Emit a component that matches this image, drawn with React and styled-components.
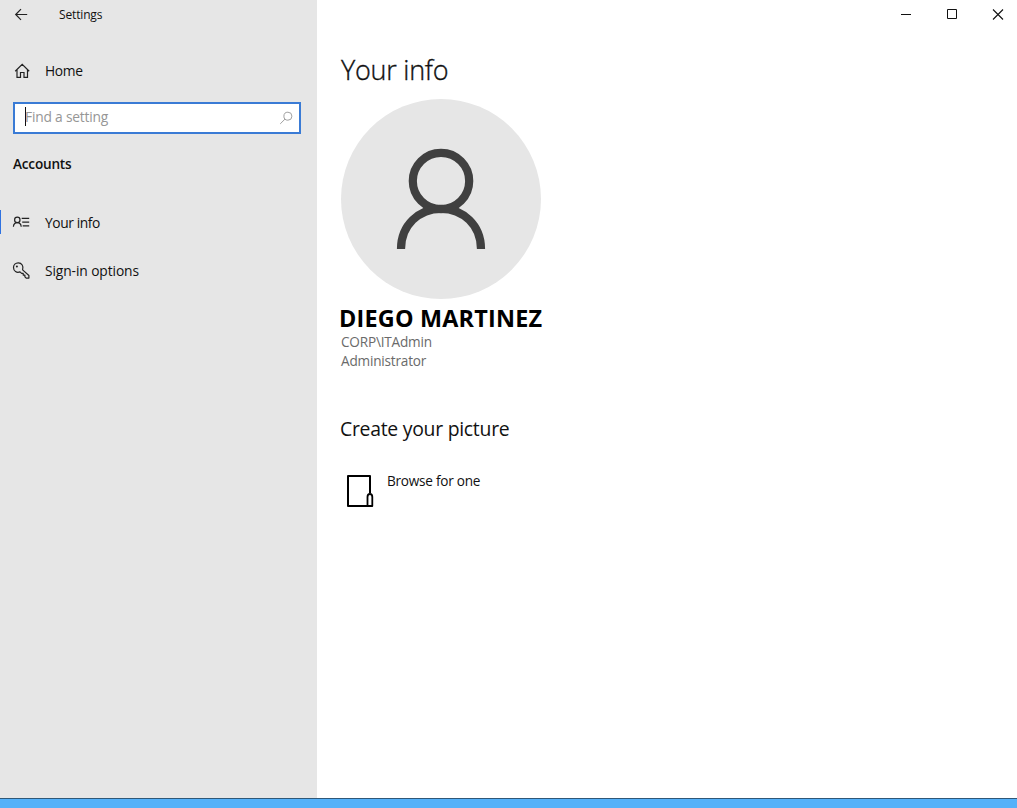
import React from "react";
import styled, { createGlobalStyle } from "styled-components";

const GlobalStyle = createGlobalStyle`
  * { box-sizing: border-box; }
  body { margin: 0; background: #fff; overflow: hidden; }
  h1, h2, h3, p { margin: 0; font-weight: 400; }
  button { border: 0; padding: 0; background: none; font: inherit; color: inherit; }
  svg { display: block; flex: none; }
`;

const Desktop = styled.div`
  height: 808px;
  display: flex;
  flex-direction: column;
  background: #55b1f9;
  font-family: "Open Sans", "Noto Sans", sans-serif;
  color: #111;
`;

const Window = styled.div`
  height: 799px;
  display: flex;
  background: #fff;
  border-bottom: 1px solid #2f5878;
`;

const Label = styled.span`
  font-size: ${(p) => p.$size || 14}px;
  font-weight: ${(p) => p.$weight || 400};
  letter-spacing: ${(p) => p.$spacing || 0}px;
  line-height: 20px;
  white-space: nowrap;
`;

const Sidebar = styled.aside`
  width: 317px;
  display: flex;
  flex-direction: column;
  background: #e6e6e6;
`;

const TitleBar = styled.header`
  height: 30px;
  padding-left: 14px;
  display: flex;
  align-items: center;
  gap: 30px;

  svg {
    margin-top: -1px;
  }
`;

const NavItem = styled.button`
  height: 48px;
  padding-left: 11px;
  display: flex;
  align-items: center;
  gap: 13px;
  border-left: 1px solid transparent;
  border-image: ${(p) =>
    p.$active
      ? "linear-gradient(transparent 11px, #2f72e0 11px, #2f72e0 35px, transparent 35px) 0 0 0 1"
      : "none"};
`;

const HomeItem = styled(NavItem)`
  margin: 17px 0 7px;
`;

const SearchBox = styled.div`
  height: 32px;
  margin: 0 16px 0 13px;
  padding: 0 6px 0 10px;
  display: flex;
  align-items: center;
  background: #fff;
  border: 2px solid #3a7bd5;
  color: #969696;
`;

const Caret = styled.span`
  width: 1px;
  height: 19px;
  margin-right: -1px;
  margin-top: -3px;
  background: #111;
`;

const Placeholder = styled(Label)`
  flex: 1;
  padding-bottom: 2px;
`;

const SectionTitle = styled.h3`
  height: 20px;
  margin: 20px 0 25px 13px;
  display: flex;
`;

const Content = styled.main`
  flex: 1;
  display: flex;
  flex-direction: column;
`;

const WindowControls = styled.div`
  height: 30px;
  display: flex;
  justify-content: flex-end;
`;

const ControlButton = styled.button`
  width: 46px;
  display: flex;
  justify-content: center;
  padding-top: 9px;
  margin-right: ${(p) => p.$offset || 0}px;
`;

const Page = styled.section`
  padding: 20px 0 0 24px;
  display: flex;
  flex-direction: column;
  align-items: flex-start;
`;

const Title = styled.h1`
  height: 49px;
  display: flex;
  align-items: flex-start;
  padding-top: 10px;
  -webkit-text-stroke: 0.35px #111;
`;

const Avatar = styled.div`
  width: 200px;
  height: 200px;
  border-radius: 50%;
  background: #e6e6e6;
`;

const Name = styled.h2`
  height: 33px;
  padding-top: 9px;
  margin-left: -2px;
  display: flex;
  color: #000;
`;

const Detail = styled.p`
  height: 19px;
  display: flex;
  color: #6a6a6a;
`;

const Subheading = styled.h2`
  height: 20px;
  margin: 49px 0 34px -1px;
  display: flex;
`;

const BrowseButton = styled.button`
  display: flex;
  align-items: flex-start;
  gap: 13px;
  padding-left: 5px;

  svg {
    margin-top: 1px;
  }

  ${Label} {
    margin-top: -2px;
  }
`;

const BackIcon = () => (
  <svg width="15" height="14" viewBox="0 0 15 14" fill="none" stroke="#222" strokeWidth="1.2">
    <path d="M13.2 6.5H1.8M7 1.2 1.7 6.5 7 11.8" />
  </svg>
);

const HomeIcon = () => (
  <svg width="20" height="18" viewBox="0 0 20 18" fill="none" stroke="#222" strokeWidth="1.2">
    <path d="M3.2 9.3 10.2 2.4 17.2 9.3M5 7.8V15.4H8.5V10.5H12V15.4H15.5V7.8" />
  </svg>
);

const ContactIcon = () => (
  <svg width="20" height="18" viewBox="0 0 20 18" fill="none" stroke="#222" strokeWidth="1.2">
    <circle cx="5.3" cy="5.9" r="2.7" />
    <path d="M1.4 12.8C1.6 10.1 3.2 8.7 5.3 8.7S9 10.1 9.2 12.8M9.7 4.4H17.2M10.2 8.1H17.2M10.7 11.9H17.2" />
  </svg>
);

const KeyIcon = () => (
  <svg width="20" height="18" viewBox="0 0 20 18" fill="none" stroke="#222" strokeWidth="1.2" strokeLinejoin="round">
    <path d="M10.6 7.9C11.9 4.3 9.7.9 6.3.9 3.5.9 1.5 3 1.5 5.6c0 3.5 3.2 5.6 6.5 4.3l1.6 1.5h1.6v1.7h1.7v1.7l1.3 1.3h2.7v-2.6Z" />
    <circle cx="4.9" cy="4.4" r="1" fill="#222" stroke="none" />
  </svg>
);

const SearchIcon = () => (
  <svg width="14" height="14" viewBox="0 0 14 14" fill="none" stroke="#a0a0a0" strokeWidth="1">
    <circle cx="8.9" cy="5.2" r="4" />
    <path d="M6.1 8 1.2 12.9" />
  </svg>
);

const PersonIcon = () => (
  <svg width="200" height="200" viewBox="0 0 200 200" fill="none" stroke="#404040" strokeWidth="8.2">
    <circle cx="100" cy="82" r="28.2" />
    <path d="M60 150C60 126 78 109.8 100 109.8S140 126 140 150" />
  </svg>
);

const BrowseIcon = () => (
  <svg width="28" height="34" viewBox="0 0 28 34" fill="none" stroke="#000" strokeWidth="2" strokeLinejoin="round">
    <path d="M24 19V2H2V32H22" />
    <path d="M21.5 32V23C21.5 21.3 22.4 20 23.9 20S26.3 21.3 26.3 23V32Z" strokeWidth="1.8" />
  </svg>
);

export default function App() {
  return (
    <>
      <GlobalStyle />
      <Desktop>
        <Window>
          <Sidebar>
            <TitleBar>
              <BackIcon />
              <Label $size={12} $spacing={-0.15}>Settings</Label>
            </TitleBar>
            <HomeItem>
              <HomeIcon />
              <Label $size={13.8} $spacing={-0.3}>Home</Label>
            </HomeItem>
            <SearchBox>
              <Caret />
              <Placeholder $size={13.8} $spacing={-0.2}>Find a setting</Placeholder>
              <SearchIcon />
            </SearchBox>
            <SectionTitle>
              <Label $size={13.6} $weight={600} $spacing={-0.2}>Accounts</Label>
            </SectionTitle>
            <NavItem $active>
              <ContactIcon />
              <Label $size={13.8} $spacing={-0.4}>Your info</Label>
            </NavItem>
            <NavItem>
              <KeyIcon />
              <Label $size={13.8} $spacing={-0.1}>Sign-in options</Label>
            </NavItem>
          </Sidebar>
          <Content>
            <WindowControls>
              <ControlButton aria-label="Minimize">
                <svg width="12" height="12" viewBox="0 0 12 12" stroke="#111"><path d="M1 5.5H11" /></svg>
              </ControlButton>
              <ControlButton aria-label="Maximize">
                <svg width="12" height="12" viewBox="0 0 12 12" stroke="#111" fill="none"><path d="M1.5 .5H10.5V9.5H1.5Z" /></svg>
              </ControlButton>
              <ControlButton aria-label="Close" $offset={-4}>
                <svg width="12" height="12" viewBox="0 0 12 12" stroke="#111" strokeWidth="1.1"><path d="M1 .5 11 10.5M11 .5 1 10.5" /></svg>
              </ControlButton>
            </WindowControls>
            <Page>
              <Title><Label $size={27} $weight={300} $spacing={-0.25}>Your info</Label></Title>
              <Avatar><PersonIcon /></Avatar>
              <Name><Label $size={23.4} $weight={700} $spacing={0.2}>DIEGO MARTINEZ</Label></Name>
              <Detail><Label $size={13.6} $spacing={-0.2}>CORP\ITAdmin</Label></Detail>
              <Detail><Label $size={13.6} $spacing={-0.2}>Administrator</Label></Detail>
              <Subheading><Label $size={19.4} $spacing={-0.27}>Create your picture</Label></Subheading>
              <BrowseButton>
                <BrowseIcon />
                <Label $size={13.6} $spacing={-0.25}>Browse for one</Label>
              </BrowseButton>
            </Page>
          </Content>
        </Window>
      </Desktop>
    </>
  );
}
